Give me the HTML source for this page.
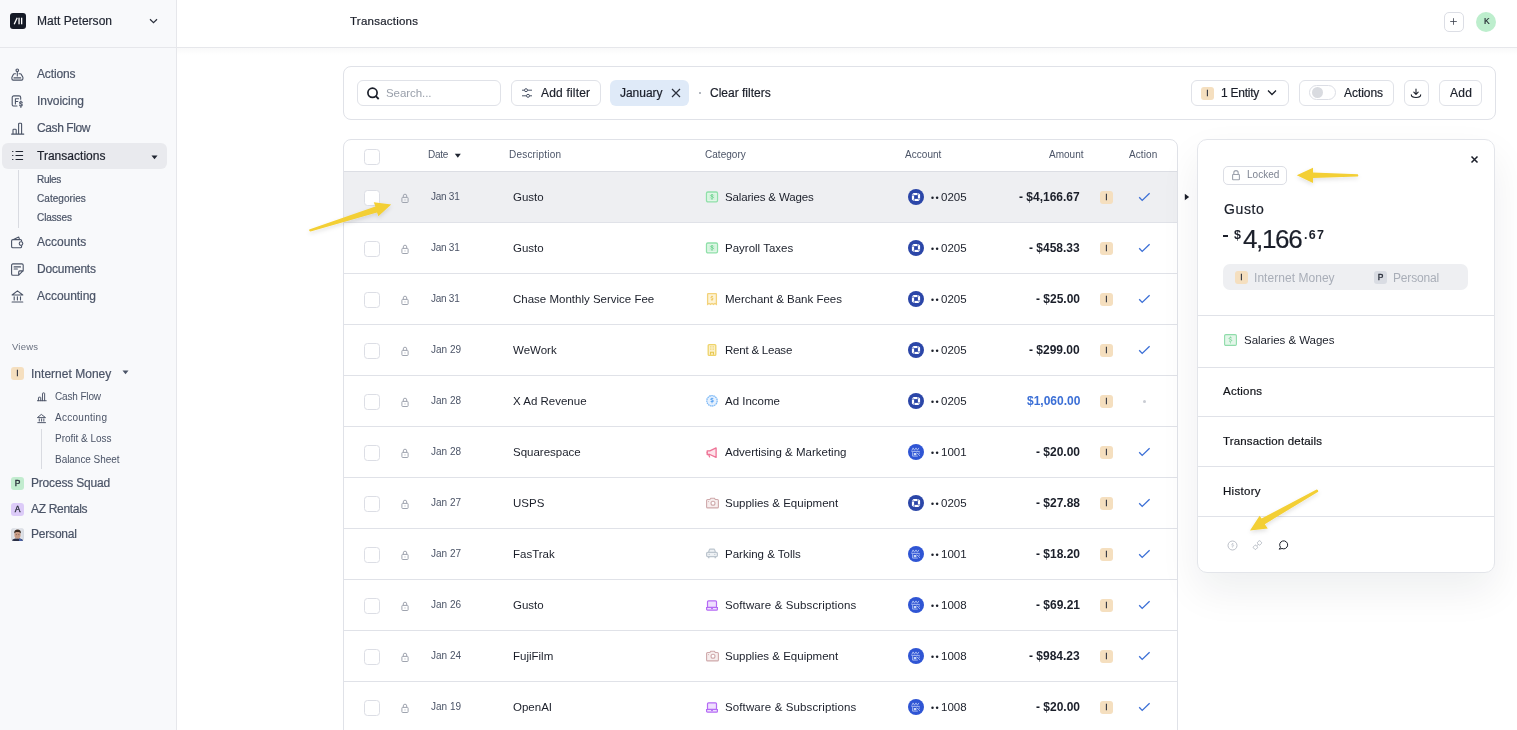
<!DOCTYPE html><html><head><meta charset="utf-8"><style>
html,body{margin:0;padding:0;width:1517px;height:730px;overflow:hidden;background:#fff;font-family:"Liberation Sans",sans-serif}
.t{position:absolute;white-space:nowrap;will-change:transform}
svg{overflow:visible}
</style></head><body>
<div style="position:absolute;left:0px;top:0px;width:176px;height:730px;background:#f8f9fb;border-right:1px solid #e6e7eb"></div>
<div style="position:absolute;left:0px;top:47px;width:1517px;height:1px;background:#e6e7eb"></div>
<div style="position:absolute;left:177px;top:48px;width:1340px;height:7px;background:linear-gradient(rgba(30,35,50,0.028),rgba(30,35,50,0))"></div>
<div style="position:absolute;left:10px;top:13px;width:16px;height:16px;background:#151a26;border-radius:3px"></div>
<svg style="position:absolute;left:10px;top:13px;" width="16" height="16" viewBox="0 0 16 16" fill="none"><path d="M4.2 11.3 L7.2 4.7" stroke="#fff" stroke-width="1.3"/><rect x="8.4" y="4.7" width="1.3" height="6.6" fill="#fff"/><rect x="11" y="4.7" width="1.3" height="6.6" fill="#fff"/></svg>
<div class="t" style="left:37.00px;top:15.29px;font-size:12px;line-height:12px;color:#1f2430;letter-spacing:0.025px;font-weight:normal;-webkit-text-stroke:0.2px #1f2430;">Matt Peterson</div>
<svg style="position:absolute;left:149px;top:18px;" width="9" height="6" viewBox="0 0 9 6" fill="none"><path d="M1 1.2 L4.5 4.6 L8 1.2" stroke="#2a2f3b" stroke-width="1.2"/></svg>
<div style="position:absolute;left:2px;top:143px;width:165px;height:26px;background:#e9eaee;border-radius:6px"></div>
<div class="t" style="left:37.00px;top:68.29px;font-size:12px;line-height:12px;color:#4b5467;letter-spacing:-0.141px;font-weight:normal;-webkit-text-stroke:0.2px #4b5467;">Actions</div>
<svg style="position:absolute;left:11px;top:67.5px;" width="13" height="13" viewBox="0 0 13 13" fill="none"><g stroke="#4b5467" stroke-width="1.1" stroke-linecap="round" stroke-linejoin="round"><circle cx="6.3" cy="2.25" r="1.3"/><path d="M6.3 3.6v4.3M4.5 5.7H3.4a1 1 0 0 0-.8.4L0.9 9.2v1.6a1.3 1.3 0 0 0 1.3 1.3h8.4a1.3 1.3 0 0 0 1.3-1.3V9.2L10.1 6.1a1 1 0 0 0-.8-.4H8.1M3 9.9h6.7"/></g></svg>
<div class="t" style="left:37.00px;top:95.29px;font-size:12px;line-height:12px;color:#4b5467;letter-spacing:-0.046px;font-weight:normal;-webkit-text-stroke:0.2px #4b5467;">Invoicing</div>
<svg style="position:absolute;left:11px;top:94.5px;" width="13" height="13" viewBox="0 0 13 13" fill="none"><g stroke="#4b5467" stroke-width="1.1" stroke-linecap="round" stroke-linejoin="round"><path d="M9.7 4.2V2.5A1.6 1.6 0 0 0 8.1 0.9H2.8A1.6 1.6 0 0 0 1.2 2.5v6.9a1.6 1.6 0 0 0 1.6 1.6H6M4.4 8.9V3.8h3.2M4.4 6.5h2.4"/><path d="M11.2 7.6c-.2-.5-.7-.8-1.3-.8-.8 0-1.3.4-1.3 1s.6.9 1.3 1 1.3.5 1.3 1.1-.6 1-1.3 1c-.6 0-1.1-.3-1.3-.8M9.9 6v.6M9.9 11.6v.7" stroke-width="1.2"/></g></svg>
<div class="t" style="left:37.00px;top:122.29px;font-size:12px;line-height:12px;color:#4b5467;letter-spacing:-0.402px;font-weight:normal;-webkit-text-stroke:0.2px #4b5467;">Cash Flow</div>
<svg style="position:absolute;left:11px;top:121.5px;" width="13" height="13" viewBox="0 0 13 13" fill="none"><g stroke="#4b5467" stroke-width="1.1" stroke-linecap="round" stroke-linejoin="round"><path d="M0.6 12.1h12.2M2 12.1V8a.8.8 0 0 1 .8-.8h1.6a.8.8 0 0 1 .8.8v4.1M7.6 12.1V2.1a.8.8 0 0 1 .8-.8h1.4a.8.8 0 0 1 .8.8v10"/></g></svg>
<div class="t" style="left:37.00px;top:150.29px;font-size:12px;line-height:12px;color:#1b1f2a;letter-spacing:0.022px;font-weight:normal;-webkit-text-stroke:0.2px #1b1f2a;">Transactions</div>
<svg style="position:absolute;left:11px;top:149.5px;" width="13" height="13" viewBox="0 0 13 13" fill="none"><g stroke="#1f2430" stroke-width="1.2" stroke-linecap="round"><path d="M1.6 1.5h.3M1.6 5.5h.3M1.6 9.5h.3M5 1.5h6.6M5 5.5h6.6M5 9.5h6.6"/></g></svg>
<div class="t" style="left:37.00px;top:236.29px;font-size:12px;line-height:12px;color:#4b5467;letter-spacing:-0.008px;font-weight:normal;-webkit-text-stroke:0.2px #4b5467;">Accounts</div>
<svg style="position:absolute;left:11px;top:235.5px;" width="13" height="13" viewBox="0 0 13 13" fill="none"><g stroke="#4b5467" stroke-width="1.1" stroke-linecap="round" stroke-linejoin="round"><path d="M10.6 5.3V4.9a1.3 1.3 0 0 0-1.3-1.3H1.9A1.3 1.3 0 0 0 .6 4.9v5.6a1.3 1.3 0 0 0 1.3 1.3h7.4a1.3 1.3 0 0 0 1.3-1.3v-.6M2.5 3.4L7.7 1l.8 2.4"/><circle cx="10" cy="7.6" r="1.8" fill="#f8f9fb"/></g></svg>
<div class="t" style="left:37.00px;top:263.29px;font-size:12px;line-height:12px;color:#4b5467;letter-spacing:-0.212px;font-weight:normal;-webkit-text-stroke:0.2px #4b5467;">Documents</div>
<svg style="position:absolute;left:11px;top:262.5px;" width="13" height="13" viewBox="0 0 13 13" fill="none"><g stroke="#4b5467" stroke-width="1.1" stroke-linecap="round" stroke-linejoin="round"><path d="M7.7 12.2H1.9A1.3 1.3 0 0 1 .6 10.9V2.2A1.3 1.3 0 0 1 1.9.9h9a1.3 1.3 0 0 1 1.3 1.3v5.4zM7.7 12.2V8.9a1 1 0 0 1 1-1h3.5M3.1 3.9h6.4M3.1 6h3.3"/></g></svg>
<div class="t" style="left:37.00px;top:290.29px;font-size:12px;line-height:12px;color:#4b5467;letter-spacing:-0.042px;font-weight:normal;-webkit-text-stroke:0.2px #4b5467;">Accounting</div>
<svg style="position:absolute;left:11px;top:289.5px;" width="13" height="13" viewBox="0 0 13 13" fill="none"><g stroke="#4b5467" stroke-width="1.1" stroke-linecap="round" stroke-linejoin="round"><path d="M1.1 5h10.7L6.45.9zM3.2 6.8v3.1M6.4 6.8v3.1M9.5 6.8v3.1M1.1 12h10.7"/></g></svg>
<svg style="position:absolute;left:151px;top:154.5px;" width="7" height="5" viewBox="0 0 7 5" fill="none"><path d="M0.5 0.5h6L3.5 4.2z" fill="#1f2430"/></svg>
<div style="position:absolute;left:18px;top:170px;width:1px;height:58px;background:#d9dbe1"></div>
<div class="t" style="left:36.70px;top:174.98px;font-size:10px;line-height:10px;color:#4b5467;letter-spacing:-0.317px;font-weight:normal;-webkit-text-stroke:0.2px #4b5467;">Rules</div>
<div class="t" style="left:36.70px;top:193.98px;font-size:10px;line-height:10px;color:#4b5467;letter-spacing:0.049px;font-weight:normal;-webkit-text-stroke:0.2px #4b5467;">Categories</div>
<div class="t" style="left:36.70px;top:212.98px;font-size:10px;line-height:10px;color:#4b5467;letter-spacing:-0.095px;font-weight:normal;-webkit-text-stroke:0.2px #4b5467;">Classes</div>
<div class="t" style="left:11.70px;top:342.40px;font-size:9.5px;line-height:9.5px;color:#6b7280;letter-spacing:0.209px;font-weight:normal;">Views</div>
<div style="position:absolute;left:11px;top:367px;width:13px;height:13px;background:#f5dfbf;border-radius:3px"></div>
<div class="t" style="left:11px;top:367px;width:13px;height:13px;line-height:13px;text-align:center;font-size:8.5px;font-weight:normal;-webkit-text-stroke:0.35px #2a2f3b;color:#2a2f3b">I</div>
<div class="t" style="left:30.60px;top:367.59px;font-size:12px;line-height:12px;color:#4b5467;letter-spacing:0.020px;font-weight:normal;-webkit-text-stroke:0.2px #4b5467;">Internet Money</div>
<svg style="position:absolute;left:122px;top:370px;" width="7" height="5" viewBox="0 0 7 5" fill="none"><path d="M0.5 0.5h6L3.5 4.2z" fill="#4b5467"/></svg>
<svg style="position:absolute;left:37px;top:392px;" width="10" height="10" viewBox="0 0 10 10" fill="none"><g transform="scale(0.72)"><g stroke="#4b5467" stroke-width="1.35" stroke-linecap="round" stroke-linejoin="round"><path d="M0.6 12.1h12.2M2 12.1V8a.8.8 0 0 1 .8-.8h1.6a.8.8 0 0 1 .8.8v4.1M7.6 12.1V2.1a.8.8 0 0 1 .8-.8h1.4a.8.8 0 0 1 .8.8v10"/></g></g></svg>
<div class="t" style="left:54.90px;top:391.68px;font-size:10px;line-height:10px;color:#4b5467;letter-spacing:-0.145px;font-weight:normal;">Cash Flow</div>
<svg style="position:absolute;left:37px;top:413.5px;" width="10" height="10" viewBox="0 0 10 10" fill="none"><g transform="scale(0.72)"><g stroke="#4b5467" stroke-width="1.35" stroke-linecap="round" stroke-linejoin="round"><path d="M1.1 5h10.7L6.45.9zM3.2 6.8v3.1M6.4 6.8v3.1M9.5 6.8v3.1M1.1 12h10.7"/></g></g></svg>
<div class="t" style="left:54.90px;top:412.88px;font-size:10px;line-height:10px;color:#4b5467;letter-spacing:0.280px;font-weight:normal;">Accounting</div>
<div style="position:absolute;left:41px;top:429px;width:1px;height:40px;background:#d9dbe1"></div>
<div class="t" style="left:54.60px;top:433.78px;font-size:10px;line-height:10px;color:#4b5467;letter-spacing:-0.007px;font-weight:normal;">Profit &amp; Loss</div>
<div class="t" style="left:54.60px;top:454.78px;font-size:10px;line-height:10px;color:#4b5467;letter-spacing:-0.038px;font-weight:normal;">Balance Sheet</div>
<div style="position:absolute;left:11px;top:477px;width:13px;height:13px;background:#c2eccf;border-radius:3px"></div>
<div class="t" style="left:11px;top:477px;width:13px;height:13px;line-height:13px;text-align:center;font-size:8.5px;font-weight:normal;-webkit-text-stroke:0.35px #2a2f3b;color:#2a2f3b">P</div>
<div class="t" style="left:30.90px;top:477.39px;font-size:12px;line-height:12px;color:#4b5467;letter-spacing:-0.190px;font-weight:normal;-webkit-text-stroke:0.2px #4b5467;">Process Squad</div>
<div style="position:absolute;left:11px;top:503px;width:13px;height:13px;background:#dccbf8;border-radius:3px"></div>
<div class="t" style="left:11px;top:503px;width:13px;height:13px;line-height:13px;text-align:center;font-size:8.5px;font-weight:normal;-webkit-text-stroke:0.35px #2a2f3b;color:#2a2f3b">A</div>
<div class="t" style="left:30.90px;top:503.19px;font-size:12px;line-height:12px;color:#4b5467;letter-spacing:-0.317px;font-weight:normal;-webkit-text-stroke:0.2px #4b5467;">AZ Rentals</div>
<div style="position:absolute;left:11px;top:528px;width:13px;height:13px;background:linear-gradient(90deg,#d5d9e0,#eceef2 50%,#d5d9e0);border-radius:3px"></div>
<svg style="position:absolute;left:11px;top:528px;" width="13" height="13" viewBox="0 0 13 13" fill="none"><defs><clipPath id="av"><rect width="13" height="13" rx="3"/></clipPath></defs><g clip-path="url(#av)"><path d="M0.5 13.5c.6-2.2 2.4-3.2 6-3.2s5.4 1 6 3.2z" fill="#2a2f45"/><path d="M8 10.5c2 .3 3.6 1 4.5 3H8z" fill="#4a62a8"/><ellipse cx="6.5" cy="6.9" rx="3.1" ry="3.7" fill="#c89c86"/><path d="M3.2 5.6c-.3-2.6 1.2-4.1 3.4-4.1s3.6 1.4 3.3 4.1c-.5-1.2-1.4-1.7-3.3-1.7s-2.9.5-3.4 1.7z" fill="#3b2b22"/><path d="M4.8 6.6h1.2M7.2 6.6h1.2" stroke="#5a4036" stroke-width=".5"/></g></svg>
<div class="t" style="left:30.90px;top:528.29px;font-size:12px;line-height:12px;color:#4b5467;letter-spacing:-0.195px;font-weight:normal;-webkit-text-stroke:0.2px #4b5467;">Personal</div>
<div class="t" style="left:350.20px;top:15.51px;font-size:11.5px;line-height:11.5px;color:#1b1f2a;letter-spacing:0.235px;font-weight:normal;-webkit-text-stroke:0.2px #1b1f2a;">Transactions</div>
<div style="position:absolute;left:1444px;top:12px;width:18px;height:18px;border:1px solid #dcdee5;border-radius:5px;background:#fff"></div>
<svg style="position:absolute;left:1449px;top:17px;" width="10" height="10" viewBox="0 0 10 10" fill="none"><path d="M4.5 1.2v6.6M1.2 4.5h6.6" stroke="#3a3f4b" stroke-width="0.8"/></svg>
<div style="position:absolute;left:1476px;top:12px;width:20px;height:20px;background:#bdeecd;border-radius:50%"></div>
<div class="t" style="left:1483.80px;top:17.15px;font-size:8.5px;line-height:8.5px;color:#1b1f2a;letter-spacing:0.000px;font-weight:normal;-webkit-text-stroke:0.2px #1b1f2a;">K</div>
<div style="position:absolute;left:343px;top:66px;width:1151px;height:52px;border:1px solid #e0e2e8;border-radius:8px;background:#fff"></div>
<div style="position:absolute;left:357px;top:80px;width:142px;height:24px;border:1px solid #e0e2e8;border-radius:6px;background:#fff"></div>
<svg style="position:absolute;left:366px;top:86px;" width="14" height="14" viewBox="0 0 14 14" fill="none"><circle cx="6.5" cy="6.8" r="4.6" stroke="#1b1f2a" stroke-width="1.7"/><path d="M9.8 10.1l2.9 2.9" stroke="#1b1f2a" stroke-width="1.8"/></svg>
<div class="t" style="left:386.00px;top:87.51px;font-size:11.5px;line-height:11.5px;color:#9aa0ab;letter-spacing:-0.065px;font-weight:normal;">Search...</div>
<div style="position:absolute;left:511px;top:80px;width:88px;height:24px;border:1px solid #e0e2e8;border-radius:6px;background:#fff"></div>
<svg style="position:absolute;left:521px;top:87px;" width="12" height="12" viewBox="0 0 12 12" fill="none"><path d="M1 3.2h2.5M6.5 3.2h4.5M1 8.8h4.5M8.5 8.8h2.5" stroke="#4b5467" stroke-width="1"/><circle cx="5" cy="3.2" r="1.5" stroke="#4b5467" stroke-width="1"/><circle cx="7" cy="8.8" r="1.5" stroke="#4b5467" stroke-width="1"/></svg>
<div class="t" style="left:541.10px;top:87.39px;font-size:12px;line-height:12px;color:#1b1f2a;letter-spacing:0.183px;font-weight:normal;-webkit-text-stroke:0.2px #1b1f2a;">Add filter</div>
<div style="position:absolute;left:610px;top:80px;width:79px;height:26px;background:#dfeaf8;border-radius:6px"></div>
<div class="t" style="left:620.00px;top:87.39px;font-size:12px;line-height:12px;color:#1b1f2a;letter-spacing:-0.033px;font-weight:normal;-webkit-text-stroke:0.2px #1b1f2a;">January</div>
<svg style="position:absolute;left:670px;top:87px;" width="12" height="12" viewBox="0 0 12 12" fill="none"><path d="M2 2l8 8M10 2l-8 8" stroke="#2a2f3b" stroke-width="1.2"/></svg>
<div style="position:absolute;left:699.3px;top:92px;width:2px;height:2px;background:#9aa0ab;border-radius:50%"></div>
<div class="t" style="left:709.60px;top:87.39px;font-size:12px;line-height:12px;color:#1b1f2a;letter-spacing:0.001px;font-weight:normal;-webkit-text-stroke:0.2px #1b1f2a;">Clear filters</div>
<div style="position:absolute;left:1191px;top:80px;width:96px;height:24px;border:1px solid #e0e2e8;border-radius:6px;background:#fff"></div>
<div style="position:absolute;left:1201px;top:87px;width:13px;height:13px;background:#f5dfbf;border-radius:3px"></div>
<div class="t" style="left:1201px;top:87px;width:13px;height:13px;line-height:13px;text-align:center;font-size:8.5px;font-weight:normal;-webkit-text-stroke:0.35px #2a2f3b;color:#2a2f3b">I</div>
<div class="t" style="left:1220.50px;top:87.39px;font-size:12px;line-height:12px;color:#1b1f2a;letter-spacing:-0.260px;font-weight:normal;-webkit-text-stroke:0.2px #1b1f2a;">1 Entity</div>
<svg style="position:absolute;left:1266px;top:89px;" width="12" height="8" viewBox="0 0 12 8" fill="none"><path d="M2 1.5l4 4 4-4" stroke="#1b1f2a" stroke-width="1.3"/></svg>
<div style="position:absolute;left:1299px;top:80px;width:93px;height:24px;border:1px solid #e0e2e8;border-radius:6px;background:#fff"></div>
<div style="position:absolute;left:1309px;top:85px;width:25px;height:13px;border:1px solid #dcdee5;border-radius:8px;background:#fff"></div>
<div style="position:absolute;left:1312px;top:87px;width:11px;height:11px;background:#d9dbe0;border-radius:50%"></div>
<div class="t" style="left:1343.50px;top:87.39px;font-size:12px;line-height:12px;color:#1b1f2a;letter-spacing:-0.058px;font-weight:normal;-webkit-text-stroke:0.2px #1b1f2a;">Actions</div>
<div style="position:absolute;left:1404px;top:80px;width:23px;height:24px;border:1px solid #e0e2e8;border-radius:6px;background:#fff"></div>
<svg style="position:absolute;left:1410px;top:88px;" width="12" height="11" viewBox="0 0 12 11" fill="none"><path d="M6 1v5.2M3.8 4.2L6 6.4l2.2-2.2M1.3 6.8c0 1.8 1.4 2.7 4.7 2.7s4.7-.9 4.7-2.7" stroke="#1b1f2a" stroke-width="1.1" stroke-linecap="round" stroke-linejoin="round"/></svg>
<div style="position:absolute;left:1439px;top:80px;width:41px;height:24px;border:1px solid #e0e2e8;border-radius:6px;background:#fff"></div>
<div class="t" style="left:1449.50px;top:87.39px;font-size:12px;line-height:12px;color:#1b1f2a;letter-spacing:0.326px;font-weight:normal;-webkit-text-stroke:0.2px #1b1f2a;">Add</div>
<div style="position:absolute;left:343px;top:139px;width:833px;height:700px;border:1px solid #e0e2e8;border-radius:8px;background:#fff"></div>
<div style="position:absolute;left:364px;top:149px;width:14px;height:14px;border:1px solid #dcdee5;border-radius:3.5px;background:#fff"></div>
<div style="position:absolute;left:344px;top:171px;width:833px;height:1px;background:#dcdee4"></div>
<div class="t" style="left:428.00px;top:149.98px;font-size:10px;line-height:10px;color:#4b5467;letter-spacing:-0.240px;font-weight:normal;">Date</div>
<svg style="position:absolute;left:454px;top:153px;" width="8" height="6" viewBox="0 0 8 6" fill="none"><path d="M0.8 0.8h6L3.8 4.8z" fill="#1f2430"/></svg>
<div class="t" style="left:509.00px;top:149.98px;font-size:10px;line-height:10px;color:#4b5467;letter-spacing:0.198px;font-weight:normal;">Description</div>
<div class="t" style="left:705.20px;top:150.18px;font-size:10px;line-height:10px;color:#4b5467;letter-spacing:0.031px;font-weight:normal;">Category</div>
<div class="t" style="left:905.10px;top:150.18px;font-size:10px;line-height:10px;color:#4b5467;letter-spacing:0.045px;font-weight:normal;">Account</div>
<div class="t" style="left:1049.20px;top:150.18px;font-size:10px;line-height:10px;color:#4b5467;letter-spacing:0.008px;font-weight:normal;">Amount</div>
<div class="t" style="left:1128.90px;top:150.18px;font-size:10px;line-height:10px;color:#4b5467;letter-spacing:0.102px;font-weight:normal;">Action</div>
<div style="position:absolute;left:344px;top:172px;width:833px;height:50px;background:#eeeff2"></div>
<div style="position:absolute;left:344px;top:222px;width:833px;height:1px;background:#e0e2e8"></div>
<div style="position:absolute;left:364px;top:190px;width:14px;height:14px;border:1px solid #dcdee5;border-radius:3.5px;background:#fff"></div>
<svg style="position:absolute;left:401px;top:193px;" width="8" height="10" viewBox="0 0 8 10" fill="none"><path d="M2.3 4.3V2.9a1.7 1.7 0 0 1 3.4 0v1.4" stroke="#9fa4af" stroke-width="1"/><rect x="0.9" y="4.4" width="6.2" height="5.1" rx="0.7" stroke="#9fa4af" stroke-width="1"/><rect x="3.6" y="6.4" width="0.8" height="1.1" fill="#9fa4af"/></svg>
<div class="t" style="left:431.00px;top:192.48px;font-size:10px;line-height:10px;color:#4b5467;letter-spacing:-0.264px;font-weight:normal;">Jan 31</div>
<div class="t" style="left:512.70px;top:191.71px;font-size:11.5px;line-height:11.5px;color:#1b1f2a;letter-spacing:0.000px;font-weight:normal;">Gusto</div>
<svg style="position:absolute;left:706px;top:191px;" width="12" height="12" viewBox="0 0 12 12" fill="none"><rect x="0.5" y="1" width="11" height="9.8" rx="1.3" fill="#e2f7e8" stroke="#8fe0a9" stroke-width="1.3"/><rect x="2.4" y="2.8" width="7.2" height="6.2" fill="#d2f2dc"/><path d="M7.3 4.3c-.3-.5-2.5-.6-2.5.4s2.5.6 2.5 1.7-2.2 1-2.6.4M6 3.2v.7M6 8v.7" stroke="#5fcf86" stroke-width="1"/></svg>
<div class="t" style="left:724.80px;top:191.71px;font-size:11.5px;line-height:11.5px;color:#1b1f2a;letter-spacing:-0.152px;font-weight:normal;">Salaries &amp; Wages</div>
<svg style="position:absolute;left:908px;top:189px;" width="16" height="16" viewBox="0 0 16 16" fill="none"><circle cx="8" cy="8" r="8" fill="#2b46a8"/><path d="M5.6 3.9h4.8l1.7 1.7v4.8l-1.7 1.7H5.6l-1.7-1.7V5.6z" fill="#fff"/><rect x="6.1" y="6.1" width="3.8" height="3.8" fill="#2b46a8"/><path d="M9.9 3.6v2.5M12.4 9.9H9.9M6.1 12.4V9.9M3.6 6.1h2.5" stroke="#2b46a8" stroke-width="0.8"/></svg>
<svg style="position:absolute;left:930px;top:195px;" width="10" height="6" viewBox="0 0 10 6" fill="none"><circle cx="2.5" cy="2.7" r="1.25" fill="#1b1f2a"/><circle cx="7.1" cy="2.7" r="1.25" fill="#1b1f2a"/></svg>
<div class="t" style="left:941.10px;top:191.71px;font-size:11.5px;line-height:11.5px;color:#1b1f2a;letter-spacing:0.000px;font-weight:normal;">0205</div>
<div class="t" style="left:1019.48px;top:191.29px;font-size:12px;line-height:12px;color:#1b1f2a;letter-spacing:0.000px;font-weight:bold;">- $4,166.67</div>
<div style="position:absolute;left:1100px;top:191px;width:13px;height:13px;background:#f5dfbf;border-radius:3px"></div>
<div class="t" style="left:1100px;top:191px;width:13px;height:13px;line-height:13px;text-align:center;font-size:8.5px;font-weight:normal;-webkit-text-stroke:0.35px #2a2f3b;color:#2a2f3b">I</div>
<svg style="position:absolute;left:1138px;top:192px;" width="13" height="10" viewBox="0 0 13 10" fill="none"><path d="M1.2 5.2l3 3.2 7.4-7.2" stroke="#3b6fd6" stroke-width="1.3"/></svg>
<div style="position:absolute;left:344px;top:273px;width:833px;height:1px;background:#e0e2e8"></div>
<div style="position:absolute;left:364px;top:241px;width:14px;height:14px;border:1px solid #dcdee5;border-radius:3.5px;background:#fff"></div>
<svg style="position:absolute;left:401px;top:244px;" width="8" height="10" viewBox="0 0 8 10" fill="none"><path d="M2.3 4.3V2.9a1.7 1.7 0 0 1 3.4 0v1.4" stroke="#9fa4af" stroke-width="1"/><rect x="0.9" y="4.4" width="6.2" height="5.1" rx="0.7" stroke="#9fa4af" stroke-width="1"/><rect x="3.6" y="6.4" width="0.8" height="1.1" fill="#9fa4af"/></svg>
<div class="t" style="left:431.00px;top:243.48px;font-size:10px;line-height:10px;color:#4b5467;letter-spacing:-0.264px;font-weight:normal;">Jan 31</div>
<div class="t" style="left:512.70px;top:242.71px;font-size:11.5px;line-height:11.5px;color:#1b1f2a;letter-spacing:0.000px;font-weight:normal;">Gusto</div>
<svg style="position:absolute;left:706px;top:242px;" width="12" height="12" viewBox="0 0 12 12" fill="none"><rect x="0.5" y="1" width="11" height="9.8" rx="1.3" fill="#e2f7e8" stroke="#8fe0a9" stroke-width="1.3"/><rect x="2.4" y="2.8" width="7.2" height="6.2" fill="#d2f2dc"/><path d="M7.3 4.3c-.3-.5-2.5-.6-2.5.4s2.5.6 2.5 1.7-2.2 1-2.6.4M6 3.2v.7M6 8v.7" stroke="#5fcf86" stroke-width="1"/></svg>
<div class="t" style="left:724.80px;top:242.71px;font-size:11.5px;line-height:11.5px;color:#1b1f2a;letter-spacing:0.000px;font-weight:normal;">Payroll Taxes</div>
<svg style="position:absolute;left:908px;top:240px;" width="16" height="16" viewBox="0 0 16 16" fill="none"><circle cx="8" cy="8" r="8" fill="#2b46a8"/><path d="M5.6 3.9h4.8l1.7 1.7v4.8l-1.7 1.7H5.6l-1.7-1.7V5.6z" fill="#fff"/><rect x="6.1" y="6.1" width="3.8" height="3.8" fill="#2b46a8"/><path d="M9.9 3.6v2.5M12.4 9.9H9.9M6.1 12.4V9.9M3.6 6.1h2.5" stroke="#2b46a8" stroke-width="0.8"/></svg>
<svg style="position:absolute;left:930px;top:246px;" width="10" height="6" viewBox="0 0 10 6" fill="none"><circle cx="2.5" cy="2.7" r="1.25" fill="#1b1f2a"/><circle cx="7.1" cy="2.7" r="1.25" fill="#1b1f2a"/></svg>
<div class="t" style="left:941.10px;top:242.71px;font-size:11.5px;line-height:11.5px;color:#1b1f2a;letter-spacing:0.000px;font-weight:normal;">0205</div>
<div class="t" style="left:1029.49px;top:242.29px;font-size:12px;line-height:12px;color:#1b1f2a;letter-spacing:0.000px;font-weight:bold;">- $458.33</div>
<div style="position:absolute;left:1100px;top:242px;width:13px;height:13px;background:#f5dfbf;border-radius:3px"></div>
<div class="t" style="left:1100px;top:242px;width:13px;height:13px;line-height:13px;text-align:center;font-size:8.5px;font-weight:normal;-webkit-text-stroke:0.35px #2a2f3b;color:#2a2f3b">I</div>
<svg style="position:absolute;left:1138px;top:243px;" width="13" height="10" viewBox="0 0 13 10" fill="none"><path d="M1.2 5.2l3 3.2 7.4-7.2" stroke="#3b6fd6" stroke-width="1.3"/></svg>
<div style="position:absolute;left:344px;top:324px;width:833px;height:1px;background:#e0e2e8"></div>
<div style="position:absolute;left:364px;top:292px;width:14px;height:14px;border:1px solid #dcdee5;border-radius:3.5px;background:#fff"></div>
<svg style="position:absolute;left:401px;top:295px;" width="8" height="10" viewBox="0 0 8 10" fill="none"><path d="M2.3 4.3V2.9a1.7 1.7 0 0 1 3.4 0v1.4" stroke="#9fa4af" stroke-width="1"/><rect x="0.9" y="4.4" width="6.2" height="5.1" rx="0.7" stroke="#9fa4af" stroke-width="1"/><rect x="3.6" y="6.4" width="0.8" height="1.1" fill="#9fa4af"/></svg>
<div class="t" style="left:431.00px;top:294.48px;font-size:10px;line-height:10px;color:#4b5467;letter-spacing:-0.264px;font-weight:normal;">Jan 31</div>
<div class="t" style="left:512.70px;top:293.71px;font-size:11.5px;line-height:11.5px;color:#1b1f2a;letter-spacing:0.000px;font-weight:normal;">Chase Monthly Service Fee</div>
<svg style="position:absolute;left:706px;top:293px;" width="12" height="12" viewBox="0 0 12 12" fill="none"><path d="M1.6 1.2a.6.6 0 0 1 .6-.6h7.6a.6.6 0 0 1 .6.6v10.2l-1.5-.9-1.4.9-1.5-.9-1.5.9-1.4-.9-1.5.9z" fill="#fdf3d6" stroke="#f3d27a" stroke-width="1.3"/><path d="M7.1 3.9c-.3-.5-2.2-.5-2.2.4s2.2.6 2.2 1.6-1.9.9-2.3.3M6 2.8v.6M6 7.3v.6" stroke="#efc350" stroke-width="1"/></svg>
<div class="t" style="left:724.80px;top:293.71px;font-size:11.5px;line-height:11.5px;color:#1b1f2a;letter-spacing:0.000px;font-weight:normal;">Merchant &amp; Bank Fees</div>
<svg style="position:absolute;left:908px;top:291px;" width="16" height="16" viewBox="0 0 16 16" fill="none"><circle cx="8" cy="8" r="8" fill="#2b46a8"/><path d="M5.6 3.9h4.8l1.7 1.7v4.8l-1.7 1.7H5.6l-1.7-1.7V5.6z" fill="#fff"/><rect x="6.1" y="6.1" width="3.8" height="3.8" fill="#2b46a8"/><path d="M9.9 3.6v2.5M12.4 9.9H9.9M6.1 12.4V9.9M3.6 6.1h2.5" stroke="#2b46a8" stroke-width="0.8"/></svg>
<svg style="position:absolute;left:930px;top:297px;" width="10" height="6" viewBox="0 0 10 6" fill="none"><circle cx="2.5" cy="2.7" r="1.25" fill="#1b1f2a"/><circle cx="7.1" cy="2.7" r="1.25" fill="#1b1f2a"/></svg>
<div class="t" style="left:941.10px;top:293.71px;font-size:11.5px;line-height:11.5px;color:#1b1f2a;letter-spacing:0.000px;font-weight:normal;">0205</div>
<div class="t" style="left:1036.17px;top:293.29px;font-size:12px;line-height:12px;color:#1b1f2a;letter-spacing:0.000px;font-weight:bold;">- $25.00</div>
<div style="position:absolute;left:1100px;top:293px;width:13px;height:13px;background:#f5dfbf;border-radius:3px"></div>
<div class="t" style="left:1100px;top:293px;width:13px;height:13px;line-height:13px;text-align:center;font-size:8.5px;font-weight:normal;-webkit-text-stroke:0.35px #2a2f3b;color:#2a2f3b">I</div>
<svg style="position:absolute;left:1138px;top:294px;" width="13" height="10" viewBox="0 0 13 10" fill="none"><path d="M1.2 5.2l3 3.2 7.4-7.2" stroke="#3b6fd6" stroke-width="1.3"/></svg>
<div style="position:absolute;left:344px;top:375px;width:833px;height:1px;background:#e0e2e8"></div>
<div style="position:absolute;left:364px;top:343px;width:14px;height:14px;border:1px solid #dcdee5;border-radius:3.5px;background:#fff"></div>
<svg style="position:absolute;left:401px;top:346px;" width="8" height="10" viewBox="0 0 8 10" fill="none"><path d="M2.3 4.3V2.9a1.7 1.7 0 0 1 3.4 0v1.4" stroke="#9fa4af" stroke-width="1"/><rect x="0.9" y="4.4" width="6.2" height="5.1" rx="0.7" stroke="#9fa4af" stroke-width="1"/><rect x="3.6" y="6.4" width="0.8" height="1.1" fill="#9fa4af"/></svg>
<div class="t" style="left:431.00px;top:345.48px;font-size:10px;line-height:10px;color:#4b5467;letter-spacing:0.000px;font-weight:normal;">Jan 29</div>
<div class="t" style="left:512.70px;top:344.71px;font-size:11.5px;line-height:11.5px;color:#1b1f2a;letter-spacing:0.000px;font-weight:normal;">WeWork</div>
<svg style="position:absolute;left:706px;top:344px;" width="12" height="12" viewBox="0 0 12 12" fill="none"><rect x="2.2" y="0.6" width="7.6" height="10.8" rx="1" fill="#fcf1c9" stroke="#eed36a" stroke-width="1.3"/><path d="M4.4 2.9h.9M6.7 2.9h.9M4.4 5.1h.9M6.7 5.1h.9M4.6 10.8V8.3h2.8v2.5" stroke="#e6c54a" stroke-width="1.1"/></svg>
<div class="t" style="left:724.80px;top:344.71px;font-size:11.5px;line-height:11.5px;color:#1b1f2a;letter-spacing:-0.217px;font-weight:normal;">Rent &amp; Lease</div>
<svg style="position:absolute;left:908px;top:342px;" width="16" height="16" viewBox="0 0 16 16" fill="none"><circle cx="8" cy="8" r="8" fill="#2b46a8"/><path d="M5.6 3.9h4.8l1.7 1.7v4.8l-1.7 1.7H5.6l-1.7-1.7V5.6z" fill="#fff"/><rect x="6.1" y="6.1" width="3.8" height="3.8" fill="#2b46a8"/><path d="M9.9 3.6v2.5M12.4 9.9H9.9M6.1 12.4V9.9M3.6 6.1h2.5" stroke="#2b46a8" stroke-width="0.8"/></svg>
<svg style="position:absolute;left:930px;top:348px;" width="10" height="6" viewBox="0 0 10 6" fill="none"><circle cx="2.5" cy="2.7" r="1.25" fill="#1b1f2a"/><circle cx="7.1" cy="2.7" r="1.25" fill="#1b1f2a"/></svg>
<div class="t" style="left:941.10px;top:344.71px;font-size:11.5px;line-height:11.5px;color:#1b1f2a;letter-spacing:0.000px;font-weight:normal;">0205</div>
<div class="t" style="left:1029.49px;top:344.29px;font-size:12px;line-height:12px;color:#1b1f2a;letter-spacing:0.000px;font-weight:bold;">- $299.00</div>
<div style="position:absolute;left:1100px;top:344px;width:13px;height:13px;background:#f5dfbf;border-radius:3px"></div>
<div class="t" style="left:1100px;top:344px;width:13px;height:13px;line-height:13px;text-align:center;font-size:8.5px;font-weight:normal;-webkit-text-stroke:0.35px #2a2f3b;color:#2a2f3b">I</div>
<svg style="position:absolute;left:1138px;top:345px;" width="13" height="10" viewBox="0 0 13 10" fill="none"><path d="M1.2 5.2l3 3.2 7.4-7.2" stroke="#3b6fd6" stroke-width="1.3"/></svg>
<div style="position:absolute;left:344px;top:426px;width:833px;height:1px;background:#e0e2e8"></div>
<div style="position:absolute;left:364px;top:394px;width:14px;height:14px;border:1px solid #dcdee5;border-radius:3.5px;background:#fff"></div>
<svg style="position:absolute;left:401px;top:397px;" width="8" height="10" viewBox="0 0 8 10" fill="none"><path d="M2.3 4.3V2.9a1.7 1.7 0 0 1 3.4 0v1.4" stroke="#9fa4af" stroke-width="1"/><rect x="0.9" y="4.4" width="6.2" height="5.1" rx="0.7" stroke="#9fa4af" stroke-width="1"/><rect x="3.6" y="6.4" width="0.8" height="1.1" fill="#9fa4af"/></svg>
<div class="t" style="left:431.00px;top:396.48px;font-size:10px;line-height:10px;color:#4b5467;letter-spacing:0.000px;font-weight:normal;">Jan 28</div>
<div class="t" style="left:512.70px;top:395.71px;font-size:11.5px;line-height:11.5px;color:#1b1f2a;letter-spacing:0.000px;font-weight:normal;">X Ad Revenue</div>
<svg style="position:absolute;left:706px;top:395px;" width="12" height="12" viewBox="0 0 12 12" fill="none"><circle cx="6" cy="5.8" r="5.2" fill="#e6f1fe" stroke="#7db9f6" stroke-width="1.3" stroke-dasharray="1.6 0.5"/><path d="M7.2 3.9c-.3-.5-2.4-.5-2.4.4s2.4.6 2.4 1.6-2.1.9-2.5.3M6 2.8v.6M6 7.6v.6" stroke="#5ea6f3" stroke-width="1.1"/></svg>
<div class="t" style="left:724.80px;top:395.71px;font-size:11.5px;line-height:11.5px;color:#1b1f2a;letter-spacing:0.000px;font-weight:normal;">Ad Income</div>
<svg style="position:absolute;left:908px;top:393px;" width="16" height="16" viewBox="0 0 16 16" fill="none"><circle cx="8" cy="8" r="8" fill="#2b46a8"/><path d="M5.6 3.9h4.8l1.7 1.7v4.8l-1.7 1.7H5.6l-1.7-1.7V5.6z" fill="#fff"/><rect x="6.1" y="6.1" width="3.8" height="3.8" fill="#2b46a8"/><path d="M9.9 3.6v2.5M12.4 9.9H9.9M6.1 12.4V9.9M3.6 6.1h2.5" stroke="#2b46a8" stroke-width="0.8"/></svg>
<svg style="position:absolute;left:930px;top:399px;" width="10" height="6" viewBox="0 0 10 6" fill="none"><circle cx="2.5" cy="2.7" r="1.25" fill="#1b1f2a"/><circle cx="7.1" cy="2.7" r="1.25" fill="#1b1f2a"/></svg>
<div class="t" style="left:941.10px;top:395.71px;font-size:11.5px;line-height:11.5px;color:#1b1f2a;letter-spacing:0.000px;font-weight:normal;">0205</div>
<div class="t" style="left:1026.81px;top:395.29px;font-size:12px;line-height:12px;color:#3b6fd6;letter-spacing:0.000px;font-weight:bold;">$1,060.00</div>
<div style="position:absolute;left:1100px;top:395px;width:13px;height:13px;background:#f5dfbf;border-radius:3px"></div>
<div class="t" style="left:1100px;top:395px;width:13px;height:13px;line-height:13px;text-align:center;font-size:8.5px;font-weight:normal;-webkit-text-stroke:0.35px #2a2f3b;color:#2a2f3b">I</div>
<div style="position:absolute;left:1143px;top:400px;width:3px;height:3px;background:#c9ccd3;border-radius:50%"></div>
<div style="position:absolute;left:344px;top:477px;width:833px;height:1px;background:#e0e2e8"></div>
<div style="position:absolute;left:364px;top:445px;width:14px;height:14px;border:1px solid #dcdee5;border-radius:3.5px;background:#fff"></div>
<svg style="position:absolute;left:401px;top:448px;" width="8" height="10" viewBox="0 0 8 10" fill="none"><path d="M2.3 4.3V2.9a1.7 1.7 0 0 1 3.4 0v1.4" stroke="#9fa4af" stroke-width="1"/><rect x="0.9" y="4.4" width="6.2" height="5.1" rx="0.7" stroke="#9fa4af" stroke-width="1"/><rect x="3.6" y="6.4" width="0.8" height="1.1" fill="#9fa4af"/></svg>
<div class="t" style="left:431.00px;top:447.48px;font-size:10px;line-height:10px;color:#4b5467;letter-spacing:0.000px;font-weight:normal;">Jan 28</div>
<div class="t" style="left:512.70px;top:446.71px;font-size:11.5px;line-height:11.5px;color:#1b1f2a;letter-spacing:0.000px;font-weight:normal;">Squarespace</div>
<svg style="position:absolute;left:706px;top:447px;" width="12" height="12" viewBox="0 0 12 12" fill="none"><path d="M1.2 3.8h2.6l6.3-2.9v9.5L3.8 7.5H1.2z" fill="#fde3ea" stroke="#ee7396" stroke-width="1.3" stroke-linejoin="round"/><path d="M2.8 7.6l.9 2.8M0.6 5.7h1" stroke="#ee7396" stroke-width="1.3"/></svg>
<div class="t" style="left:724.80px;top:446.71px;font-size:11.5px;line-height:11.5px;color:#1b1f2a;letter-spacing:0.000px;font-weight:normal;">Advertising &amp; Marketing</div>
<svg style="position:absolute;left:908px;top:444px;" width="16" height="16" viewBox="0 0 16 16" fill="none"><circle cx="8" cy="8" r="8" fill="#2f55d4"/><g stroke="#aebff3" stroke-width="0.9" fill="none"><path d="M3.8 6.6L5.1 3.9 6.5 6.2 8 3.9 9.4 6.2 10.9 3.9M3.4 7.4h8.4M4.6 8.2v3.9h5.2M8.6 8.6l3.4 3.3M11.2 8.4v1.6"/></g><rect x="5.8" y="9" width="2.6" height="2.2" fill="#c9d6f7"/></svg>
<svg style="position:absolute;left:930px;top:450px;" width="10" height="6" viewBox="0 0 10 6" fill="none"><circle cx="2.5" cy="2.7" r="1.25" fill="#1b1f2a"/><circle cx="7.1" cy="2.7" r="1.25" fill="#1b1f2a"/></svg>
<div class="t" style="left:941.10px;top:446.71px;font-size:11.5px;line-height:11.5px;color:#1b1f2a;letter-spacing:0.000px;font-weight:normal;">1001</div>
<div class="t" style="left:1036.17px;top:446.29px;font-size:12px;line-height:12px;color:#1b1f2a;letter-spacing:0.000px;font-weight:bold;">- $20.00</div>
<div style="position:absolute;left:1100px;top:446px;width:13px;height:13px;background:#f5dfbf;border-radius:3px"></div>
<div class="t" style="left:1100px;top:446px;width:13px;height:13px;line-height:13px;text-align:center;font-size:8.5px;font-weight:normal;-webkit-text-stroke:0.35px #2a2f3b;color:#2a2f3b">I</div>
<svg style="position:absolute;left:1138px;top:447px;" width="13" height="10" viewBox="0 0 13 10" fill="none"><path d="M1.2 5.2l3 3.2 7.4-7.2" stroke="#3b6fd6" stroke-width="1.3"/></svg>
<div style="position:absolute;left:344px;top:528px;width:833px;height:1px;background:#e0e2e8"></div>
<div style="position:absolute;left:364px;top:496px;width:14px;height:14px;border:1px solid #dcdee5;border-radius:3.5px;background:#fff"></div>
<svg style="position:absolute;left:401px;top:499px;" width="8" height="10" viewBox="0 0 8 10" fill="none"><path d="M2.3 4.3V2.9a1.7 1.7 0 0 1 3.4 0v1.4" stroke="#9fa4af" stroke-width="1"/><rect x="0.9" y="4.4" width="6.2" height="5.1" rx="0.7" stroke="#9fa4af" stroke-width="1"/><rect x="3.6" y="6.4" width="0.8" height="1.1" fill="#9fa4af"/></svg>
<div class="t" style="left:431.00px;top:498.48px;font-size:10px;line-height:10px;color:#4b5467;letter-spacing:0.000px;font-weight:normal;">Jan 27</div>
<div class="t" style="left:512.70px;top:497.71px;font-size:11.5px;line-height:11.5px;color:#1b1f2a;letter-spacing:0.000px;font-weight:normal;">USPS</div>
<svg style="position:absolute;left:706px;top:497.3px;" width="12" height="12" viewBox="0 0 12 12" fill="none"><path d="M0.6 3.5a1 1 0 0 1 1-1h2.2l1-1.2h3.6l1 1.2h2a1 1 0 0 1 1 1v6.4a1 1 0 0 1-1 1H1.6a1 1 0 0 1-1-1z" fill="#f7eeee" stroke="#cfa9ab" stroke-width="1.1"/><circle cx="7" cy="6.3" r="2" fill="#fff" stroke="#cfa9ab" stroke-width="1.1"/><path d="M2.2 4.6h.8" stroke="#cfa9ab" stroke-width="1"/></svg>
<div class="t" style="left:724.80px;top:497.71px;font-size:11.5px;line-height:11.5px;color:#1b1f2a;letter-spacing:0.000px;font-weight:normal;">Supplies &amp; Equipment</div>
<svg style="position:absolute;left:908px;top:495px;" width="16" height="16" viewBox="0 0 16 16" fill="none"><circle cx="8" cy="8" r="8" fill="#2b46a8"/><path d="M5.6 3.9h4.8l1.7 1.7v4.8l-1.7 1.7H5.6l-1.7-1.7V5.6z" fill="#fff"/><rect x="6.1" y="6.1" width="3.8" height="3.8" fill="#2b46a8"/><path d="M9.9 3.6v2.5M12.4 9.9H9.9M6.1 12.4V9.9M3.6 6.1h2.5" stroke="#2b46a8" stroke-width="0.8"/></svg>
<svg style="position:absolute;left:930px;top:501px;" width="10" height="6" viewBox="0 0 10 6" fill="none"><circle cx="2.5" cy="2.7" r="1.25" fill="#1b1f2a"/><circle cx="7.1" cy="2.7" r="1.25" fill="#1b1f2a"/></svg>
<div class="t" style="left:941.10px;top:497.71px;font-size:11.5px;line-height:11.5px;color:#1b1f2a;letter-spacing:0.000px;font-weight:normal;">0205</div>
<div class="t" style="left:1036.17px;top:497.29px;font-size:12px;line-height:12px;color:#1b1f2a;letter-spacing:0.000px;font-weight:bold;">- $27.88</div>
<div style="position:absolute;left:1100px;top:497px;width:13px;height:13px;background:#f5dfbf;border-radius:3px"></div>
<div class="t" style="left:1100px;top:497px;width:13px;height:13px;line-height:13px;text-align:center;font-size:8.5px;font-weight:normal;-webkit-text-stroke:0.35px #2a2f3b;color:#2a2f3b">I</div>
<svg style="position:absolute;left:1138px;top:498px;" width="13" height="10" viewBox="0 0 13 10" fill="none"><path d="M1.2 5.2l3 3.2 7.4-7.2" stroke="#3b6fd6" stroke-width="1.3"/></svg>
<div style="position:absolute;left:344px;top:579px;width:833px;height:1px;background:#e0e2e8"></div>
<div style="position:absolute;left:364px;top:547px;width:14px;height:14px;border:1px solid #dcdee5;border-radius:3.5px;background:#fff"></div>
<svg style="position:absolute;left:401px;top:550px;" width="8" height="10" viewBox="0 0 8 10" fill="none"><path d="M2.3 4.3V2.9a1.7 1.7 0 0 1 3.4 0v1.4" stroke="#9fa4af" stroke-width="1"/><rect x="0.9" y="4.4" width="6.2" height="5.1" rx="0.7" stroke="#9fa4af" stroke-width="1"/><rect x="3.6" y="6.4" width="0.8" height="1.1" fill="#9fa4af"/></svg>
<div class="t" style="left:431.00px;top:549.48px;font-size:10px;line-height:10px;color:#4b5467;letter-spacing:0.000px;font-weight:normal;">Jan 27</div>
<div class="t" style="left:512.70px;top:548.71px;font-size:11.5px;line-height:11.5px;color:#1b1f2a;letter-spacing:0.000px;font-weight:normal;">FasTrak</div>
<svg style="position:absolute;left:706px;top:548.3px;" width="12" height="12" viewBox="0 0 12 12" fill="none"><path d="M2.6 4.3l.8-2.6a.8.8 0 0 1 .8-.6h3.6a.8.8 0 0 1 .8.6l.8 2.6" fill="#eef1f4" stroke="#bcc5ce" stroke-width="1.2"/><rect x="0.6" y="4.3" width="10.8" height="4.3" rx="1.2" fill="#eef1f4" stroke="#bcc5ce" stroke-width="1.2"/><path d="M2.7 8.6v1.6M9.3 8.6v1.6" stroke="#bcc5ce" stroke-width="1.6"/><circle cx="3.2" cy="6.4" r=".6" fill="#bcc5ce"/><circle cx="8.8" cy="6.4" r=".6" fill="#bcc5ce"/></svg>
<div class="t" style="left:724.80px;top:548.71px;font-size:11.5px;line-height:11.5px;color:#1b1f2a;letter-spacing:0.000px;font-weight:normal;">Parking &amp; Tolls</div>
<svg style="position:absolute;left:908px;top:546px;" width="16" height="16" viewBox="0 0 16 16" fill="none"><circle cx="8" cy="8" r="8" fill="#2f55d4"/><g stroke="#aebff3" stroke-width="0.9" fill="none"><path d="M3.8 6.6L5.1 3.9 6.5 6.2 8 3.9 9.4 6.2 10.9 3.9M3.4 7.4h8.4M4.6 8.2v3.9h5.2M8.6 8.6l3.4 3.3M11.2 8.4v1.6"/></g><rect x="5.8" y="9" width="2.6" height="2.2" fill="#c9d6f7"/></svg>
<svg style="position:absolute;left:930px;top:552px;" width="10" height="6" viewBox="0 0 10 6" fill="none"><circle cx="2.5" cy="2.7" r="1.25" fill="#1b1f2a"/><circle cx="7.1" cy="2.7" r="1.25" fill="#1b1f2a"/></svg>
<div class="t" style="left:941.10px;top:548.71px;font-size:11.5px;line-height:11.5px;color:#1b1f2a;letter-spacing:0.000px;font-weight:normal;">1001</div>
<div class="t" style="left:1036.17px;top:548.29px;font-size:12px;line-height:12px;color:#1b1f2a;letter-spacing:0.000px;font-weight:bold;">- $18.20</div>
<div style="position:absolute;left:1100px;top:548px;width:13px;height:13px;background:#f5dfbf;border-radius:3px"></div>
<div class="t" style="left:1100px;top:548px;width:13px;height:13px;line-height:13px;text-align:center;font-size:8.5px;font-weight:normal;-webkit-text-stroke:0.35px #2a2f3b;color:#2a2f3b">I</div>
<svg style="position:absolute;left:1138px;top:549px;" width="13" height="10" viewBox="0 0 13 10" fill="none"><path d="M1.2 5.2l3 3.2 7.4-7.2" stroke="#3b6fd6" stroke-width="1.3"/></svg>
<div style="position:absolute;left:344px;top:630px;width:833px;height:1px;background:#e0e2e8"></div>
<div style="position:absolute;left:364px;top:598px;width:14px;height:14px;border:1px solid #dcdee5;border-radius:3.5px;background:#fff"></div>
<svg style="position:absolute;left:401px;top:601px;" width="8" height="10" viewBox="0 0 8 10" fill="none"><path d="M2.3 4.3V2.9a1.7 1.7 0 0 1 3.4 0v1.4" stroke="#9fa4af" stroke-width="1"/><rect x="0.9" y="4.4" width="6.2" height="5.1" rx="0.7" stroke="#9fa4af" stroke-width="1"/><rect x="3.6" y="6.4" width="0.8" height="1.1" fill="#9fa4af"/></svg>
<div class="t" style="left:431.00px;top:600.48px;font-size:10px;line-height:10px;color:#4b5467;letter-spacing:0.000px;font-weight:normal;">Jan 26</div>
<div class="t" style="left:512.70px;top:599.71px;font-size:11.5px;line-height:11.5px;color:#1b1f2a;letter-spacing:0.000px;font-weight:normal;">Gusto</div>
<svg style="position:absolute;left:706px;top:599.8px;" width="12" height="12" viewBox="0 0 12 12" fill="none"><rect x="1.5" y="0.8" width="9" height="6.6" rx="1" fill="#efe0fe" stroke="#b56af5" stroke-width="1.2"/><path d="M0.6 7.5h10.8v1.7a.9.9 0 0 1-.9.9H1.5a.9.9 0 0 1-.9-.9z" fill="#efe0fe" stroke="#b56af5" stroke-width="1.2"/><path d="M5 8.6h2" stroke="#b56af5" stroke-width="1"/></svg>
<div class="t" style="left:724.80px;top:599.71px;font-size:11.5px;line-height:11.5px;color:#1b1f2a;letter-spacing:0.118px;font-weight:normal;">Software &amp; Subscriptions</div>
<svg style="position:absolute;left:908px;top:597px;" width="16" height="16" viewBox="0 0 16 16" fill="none"><circle cx="8" cy="8" r="8" fill="#2f55d4"/><g stroke="#aebff3" stroke-width="0.9" fill="none"><path d="M3.8 6.6L5.1 3.9 6.5 6.2 8 3.9 9.4 6.2 10.9 3.9M3.4 7.4h8.4M4.6 8.2v3.9h5.2M8.6 8.6l3.4 3.3M11.2 8.4v1.6"/></g><rect x="5.8" y="9" width="2.6" height="2.2" fill="#c9d6f7"/></svg>
<svg style="position:absolute;left:930px;top:603px;" width="10" height="6" viewBox="0 0 10 6" fill="none"><circle cx="2.5" cy="2.7" r="1.25" fill="#1b1f2a"/><circle cx="7.1" cy="2.7" r="1.25" fill="#1b1f2a"/></svg>
<div class="t" style="left:941.10px;top:599.71px;font-size:11.5px;line-height:11.5px;color:#1b1f2a;letter-spacing:0.000px;font-weight:normal;">1008</div>
<div class="t" style="left:1036.17px;top:599.29px;font-size:12px;line-height:12px;color:#1b1f2a;letter-spacing:0.000px;font-weight:bold;">- $69.21</div>
<div style="position:absolute;left:1100px;top:599px;width:13px;height:13px;background:#f5dfbf;border-radius:3px"></div>
<div class="t" style="left:1100px;top:599px;width:13px;height:13px;line-height:13px;text-align:center;font-size:8.5px;font-weight:normal;-webkit-text-stroke:0.35px #2a2f3b;color:#2a2f3b">I</div>
<svg style="position:absolute;left:1138px;top:600px;" width="13" height="10" viewBox="0 0 13 10" fill="none"><path d="M1.2 5.2l3 3.2 7.4-7.2" stroke="#3b6fd6" stroke-width="1.3"/></svg>
<div style="position:absolute;left:344px;top:681px;width:833px;height:1px;background:#e0e2e8"></div>
<div style="position:absolute;left:364px;top:649px;width:14px;height:14px;border:1px solid #dcdee5;border-radius:3.5px;background:#fff"></div>
<svg style="position:absolute;left:401px;top:652px;" width="8" height="10" viewBox="0 0 8 10" fill="none"><path d="M2.3 4.3V2.9a1.7 1.7 0 0 1 3.4 0v1.4" stroke="#9fa4af" stroke-width="1"/><rect x="0.9" y="4.4" width="6.2" height="5.1" rx="0.7" stroke="#9fa4af" stroke-width="1"/><rect x="3.6" y="6.4" width="0.8" height="1.1" fill="#9fa4af"/></svg>
<div class="t" style="left:431.00px;top:651.48px;font-size:10px;line-height:10px;color:#4b5467;letter-spacing:0.000px;font-weight:normal;">Jan 24</div>
<div class="t" style="left:512.70px;top:650.71px;font-size:11.5px;line-height:11.5px;color:#1b1f2a;letter-spacing:0.000px;font-weight:normal;">FujiFilm</div>
<svg style="position:absolute;left:706px;top:650.3px;" width="12" height="12" viewBox="0 0 12 12" fill="none"><path d="M0.6 3.5a1 1 0 0 1 1-1h2.2l1-1.2h3.6l1 1.2h2a1 1 0 0 1 1 1v6.4a1 1 0 0 1-1 1H1.6a1 1 0 0 1-1-1z" fill="#f7eeee" stroke="#cfa9ab" stroke-width="1.1"/><circle cx="7" cy="6.3" r="2" fill="#fff" stroke="#cfa9ab" stroke-width="1.1"/><path d="M2.2 4.6h.8" stroke="#cfa9ab" stroke-width="1"/></svg>
<div class="t" style="left:724.80px;top:650.71px;font-size:11.5px;line-height:11.5px;color:#1b1f2a;letter-spacing:0.000px;font-weight:normal;">Supplies &amp; Equipment</div>
<svg style="position:absolute;left:908px;top:648px;" width="16" height="16" viewBox="0 0 16 16" fill="none"><circle cx="8" cy="8" r="8" fill="#2f55d4"/><g stroke="#aebff3" stroke-width="0.9" fill="none"><path d="M3.8 6.6L5.1 3.9 6.5 6.2 8 3.9 9.4 6.2 10.9 3.9M3.4 7.4h8.4M4.6 8.2v3.9h5.2M8.6 8.6l3.4 3.3M11.2 8.4v1.6"/></g><rect x="5.8" y="9" width="2.6" height="2.2" fill="#c9d6f7"/></svg>
<svg style="position:absolute;left:930px;top:654px;" width="10" height="6" viewBox="0 0 10 6" fill="none"><circle cx="2.5" cy="2.7" r="1.25" fill="#1b1f2a"/><circle cx="7.1" cy="2.7" r="1.25" fill="#1b1f2a"/></svg>
<div class="t" style="left:941.10px;top:650.71px;font-size:11.5px;line-height:11.5px;color:#1b1f2a;letter-spacing:0.000px;font-weight:normal;">1008</div>
<div class="t" style="left:1029.49px;top:650.29px;font-size:12px;line-height:12px;color:#1b1f2a;letter-spacing:0.000px;font-weight:bold;">- $984.23</div>
<div style="position:absolute;left:1100px;top:650px;width:13px;height:13px;background:#f5dfbf;border-radius:3px"></div>
<div class="t" style="left:1100px;top:650px;width:13px;height:13px;line-height:13px;text-align:center;font-size:8.5px;font-weight:normal;-webkit-text-stroke:0.35px #2a2f3b;color:#2a2f3b">I</div>
<svg style="position:absolute;left:1138px;top:651px;" width="13" height="10" viewBox="0 0 13 10" fill="none"><path d="M1.2 5.2l3 3.2 7.4-7.2" stroke="#3b6fd6" stroke-width="1.3"/></svg>
<div style="position:absolute;left:344px;top:732px;width:833px;height:1px;background:#e0e2e8"></div>
<div style="position:absolute;left:364px;top:700px;width:14px;height:14px;border:1px solid #dcdee5;border-radius:3.5px;background:#fff"></div>
<svg style="position:absolute;left:401px;top:703px;" width="8" height="10" viewBox="0 0 8 10" fill="none"><path d="M2.3 4.3V2.9a1.7 1.7 0 0 1 3.4 0v1.4" stroke="#9fa4af" stroke-width="1"/><rect x="0.9" y="4.4" width="6.2" height="5.1" rx="0.7" stroke="#9fa4af" stroke-width="1"/><rect x="3.6" y="6.4" width="0.8" height="1.1" fill="#9fa4af"/></svg>
<div class="t" style="left:431.00px;top:702.48px;font-size:10px;line-height:10px;color:#4b5467;letter-spacing:0.000px;font-weight:normal;">Jan 19</div>
<div class="t" style="left:512.70px;top:701.71px;font-size:11.5px;line-height:11.5px;color:#1b1f2a;letter-spacing:0.000px;font-weight:normal;">OpenAI</div>
<svg style="position:absolute;left:706px;top:701.8px;" width="12" height="12" viewBox="0 0 12 12" fill="none"><rect x="1.5" y="0.8" width="9" height="6.6" rx="1" fill="#efe0fe" stroke="#b56af5" stroke-width="1.2"/><path d="M0.6 7.5h10.8v1.7a.9.9 0 0 1-.9.9H1.5a.9.9 0 0 1-.9-.9z" fill="#efe0fe" stroke="#b56af5" stroke-width="1.2"/><path d="M5 8.6h2" stroke="#b56af5" stroke-width="1"/></svg>
<div class="t" style="left:724.80px;top:701.71px;font-size:11.5px;line-height:11.5px;color:#1b1f2a;letter-spacing:0.118px;font-weight:normal;">Software &amp; Subscriptions</div>
<svg style="position:absolute;left:908px;top:699px;" width="16" height="16" viewBox="0 0 16 16" fill="none"><circle cx="8" cy="8" r="8" fill="#2f55d4"/><g stroke="#aebff3" stroke-width="0.9" fill="none"><path d="M3.8 6.6L5.1 3.9 6.5 6.2 8 3.9 9.4 6.2 10.9 3.9M3.4 7.4h8.4M4.6 8.2v3.9h5.2M8.6 8.6l3.4 3.3M11.2 8.4v1.6"/></g><rect x="5.8" y="9" width="2.6" height="2.2" fill="#c9d6f7"/></svg>
<svg style="position:absolute;left:930px;top:705px;" width="10" height="6" viewBox="0 0 10 6" fill="none"><circle cx="2.5" cy="2.7" r="1.25" fill="#1b1f2a"/><circle cx="7.1" cy="2.7" r="1.25" fill="#1b1f2a"/></svg>
<div class="t" style="left:941.10px;top:701.71px;font-size:11.5px;line-height:11.5px;color:#1b1f2a;letter-spacing:0.000px;font-weight:normal;">1008</div>
<div class="t" style="left:1036.17px;top:701.29px;font-size:12px;line-height:12px;color:#1b1f2a;letter-spacing:0.000px;font-weight:bold;">- $20.00</div>
<div style="position:absolute;left:1100px;top:701px;width:13px;height:13px;background:#f5dfbf;border-radius:3px"></div>
<div class="t" style="left:1100px;top:701px;width:13px;height:13px;line-height:13px;text-align:center;font-size:8.5px;font-weight:normal;-webkit-text-stroke:0.35px #2a2f3b;color:#2a2f3b">I</div>
<svg style="position:absolute;left:1138px;top:702px;" width="13" height="10" viewBox="0 0 13 10" fill="none"><path d="M1.2 5.2l3 3.2 7.4-7.2" stroke="#3b6fd6" stroke-width="1.3"/></svg>
<svg style="position:absolute;left:1184px;top:193px;" width="6" height="8" viewBox="0 0 6 8" fill="none"><path d="M0.8 0.8v6.4L5.2 4z" fill="#1b1f2a"/></svg>
<div style="position:absolute;left:1197px;top:139px;width:296px;height:432px;border:1px solid #e3e5ea;border-radius:10px;background:#fff;box-shadow:0 18px 40px rgba(20,25,40,0.07)"></div>
<svg style="position:absolute;left:1470px;top:155px;" width="9" height="9" viewBox="0 0 9 9" fill="none"><path d="M1.5 1.5l6 6M7.5 1.5l-6 6" stroke="#1b1f2a" stroke-width="1.5"/></svg>
<div style="position:absolute;left:1223px;top:166px;width:62px;height:17px;border:1px solid #dcdee5;border-radius:5px;background:#fff"></div>
<svg style="position:absolute;left:1231px;top:169px;" width="10" height="12" viewBox="0 0 10 12" fill="none"><path d="M2.8 5.5V3.8a2.2 2.2 0 0 1 4.4 0v1.7" stroke="#9da2ad" stroke-width="1.1"/><rect x="1.6" y="5.5" width="6.8" height="5.3" rx="0.6" stroke="#9da2ad" stroke-width="1.1"/></svg>
<div class="t" style="left:1246.60px;top:170.38px;font-size:10px;line-height:10px;color:#7d8391;letter-spacing:0.030px;font-weight:normal;">Locked</div>
<div class="t" style="left:1223.50px;top:202.29px;font-size:14px;line-height:14px;color:#1b1f2a;letter-spacing:0.637px;font-weight:normal;-webkit-text-stroke:0.2px #1b1f2a;">Gusto</div>
<div style="position:absolute;left:1223px;top:235px;width:5px;height:1.6px;background:#1b1f2a"></div>
<div class="t" style="left:1234.00px;top:229.36px;font-size:12.5px;line-height:12.5px;color:#1b1f2a;letter-spacing:0.000px;font-weight:bold;">$</div>
<div class="t" style="left:1243.40px;top:225.93px;font-size:26px;line-height:26px;color:#1b1f2a;letter-spacing:-1.363px;font-weight:normal;-webkit-text-stroke:0.2px #1b1f2a;">4,166</div>
<div class="t" style="left:1303.50px;top:228.86px;font-size:12.5px;line-height:12.5px;color:#1b1f2a;letter-spacing:1.312px;font-weight:bold;">.67</div>
<div style="position:absolute;left:1223px;top:264px;width:245px;height:26px;background:#eeeff2;border-radius:7px"></div>
<div style="position:absolute;left:1235px;top:271px;width:13px;height:13px;background:#f5dfbf;border-radius:3px"></div>
<div class="t" style="left:1235px;top:271px;width:13px;height:13px;line-height:13px;text-align:center;font-size:8.5px;font-weight:normal;-webkit-text-stroke:0.35px #2a2f3b;color:#2a2f3b">I</div>
<div class="t" style="left:1254.00px;top:271.69px;font-size:12px;line-height:12px;color:#a9aeb8;letter-spacing:0.043px;font-weight:normal;">Internet Money</div>
<div style="position:absolute;left:1374px;top:271px;width:13px;height:13px;background:#d9dce3;border-radius:3px"></div>
<div class="t" style="left:1374px;top:271px;width:13px;height:13px;line-height:13px;text-align:center;font-size:8.5px;font-weight:normal;-webkit-text-stroke:0.35px #2a2f3b;color:#2a2f3b">P</div>
<div class="t" style="left:1393.30px;top:271.69px;font-size:12px;line-height:12px;color:#a9aeb8;letter-spacing:-0.166px;font-weight:normal;">Personal</div>
<div style="position:absolute;left:1198px;top:315px;width:296px;height:1px;background:#e0e2e8"></div>
<div style="position:absolute;left:1198px;top:367px;width:296px;height:1px;background:#e0e2e8"></div>
<div style="position:absolute;left:1198px;top:416px;width:296px;height:1px;background:#e0e2e8"></div>
<div style="position:absolute;left:1198px;top:466px;width:296px;height:1px;background:#e0e2e8"></div>
<div style="position:absolute;left:1198px;top:516px;width:296px;height:1px;background:#e0e2e8"></div>
<svg style="position:absolute;left:1224px;top:334px;" width="13" height="12" viewBox="0 0 13 12" fill="none"><rect x="0.6" y="0.6" width="11.8" height="10.8" rx="1.2" fill="#e3f6e9" stroke="#8fdcaa" stroke-width="1.1"/><path d="M7.7 4c-.3-.5-2.6-.6-2.6.5s2.6.7 2.6 1.9-2.3 1-2.7.4M6.5 2.6v.9M6.5 8.4v.9" stroke="#6fd08f" stroke-width="0.9"/></svg>
<div class="t" style="left:1243.60px;top:334.61px;font-size:11.5px;line-height:11.5px;color:#1b1f2a;letter-spacing:-0.038px;font-weight:normal;">Salaries &amp; Wages</div>
<div class="t" style="left:1223.30px;top:385.81px;font-size:11.5px;line-height:11.5px;color:#111319;letter-spacing:0.232px;font-weight:normal;-webkit-text-stroke:0.2px #111319;">Actions</div>
<div class="t" style="left:1223.30px;top:436.11px;font-size:11.5px;line-height:11.5px;color:#111319;letter-spacing:0.161px;font-weight:normal;-webkit-text-stroke:0.2px #111319;">Transaction details</div>
<div class="t" style="left:1223.30px;top:486.41px;font-size:11.5px;line-height:11.5px;color:#111319;letter-spacing:0.304px;font-weight:normal;-webkit-text-stroke:0.2px #111319;">History</div>
<svg style="position:absolute;left:1227px;top:540px;" width="11" height="11" viewBox="0 0 11 11" fill="none"><circle cx="5.5" cy="5.5" r="4.5" stroke="#b3b8c1" stroke-width="0.9"/><path d="M6.6 4c-.3-.4-1.9-.4-1.9.4s1.9.5 1.9 1.3-1.6.7-2 .3M5.5 3v.5M5.5 7.5v.5" stroke="#b3b8c1" stroke-width="0.7"/></svg>
<svg style="position:absolute;left:1252px;top:540px;" width="11" height="11" viewBox="0 0 11 11" fill="none"><g stroke="#aeb3bd" stroke-width="0.8"><rect x="-1.8" y="-1.8" width="3.6" height="3.6" rx="0.9" transform="translate(7.5 2.9) rotate(45)"/><rect x="-1.8" y="-1.8" width="3.6" height="3.6" rx="0.9" transform="translate(3.4 7.3) rotate(45)"/><path d="M4.6 6.1L6.3 4.2"/></g></svg>
<svg style="position:absolute;left:1278px;top:539px;" width="11" height="11" viewBox="0 0 11 11" fill="none"><path d="M2.5 8.3A4 4 0 1 1 4 9.5L1.2 10.2z" stroke="#1b1f2a" stroke-width="1"/></svg>
<svg style="position:absolute;left:0;top:0" width="1517" height="730" viewBox="0 0 1517 730"><defs><filter id="sh" x="-20%" y="-20%" width="140%" height="160%"><feDropShadow dx="0" dy="2" stdDeviation="2" flood-color="#000" flood-opacity="0.12"/></filter></defs><g filter="url(#sh)" fill="#f3cf34"><path d="M309.2 229.6 L375.4 206.6 L373.8 202.2 L391.2 204.4 L378.4 216.3 L377 212.6 L310.6 231.6 Q308.6 231.4 309.2 229.6 Z"/><path d="M1357.8 174.2 L1313 172.6 L1313 167.7 L1296.8 175.3 L1313 182.9 L1313 178 L1357.8 176.6 Q1359 175.4 1357.8 174.2 Z"/><path d="M1316.6 489.6 L1261.6 518.6 L1259.6 515.8 L1250 530.4 L1267.8 528.6 L1264.8 524.2 L1318.2 491.8 Q1318.6 489.6 1316.6 489.6 Z"/></g></svg>
</body></html>
